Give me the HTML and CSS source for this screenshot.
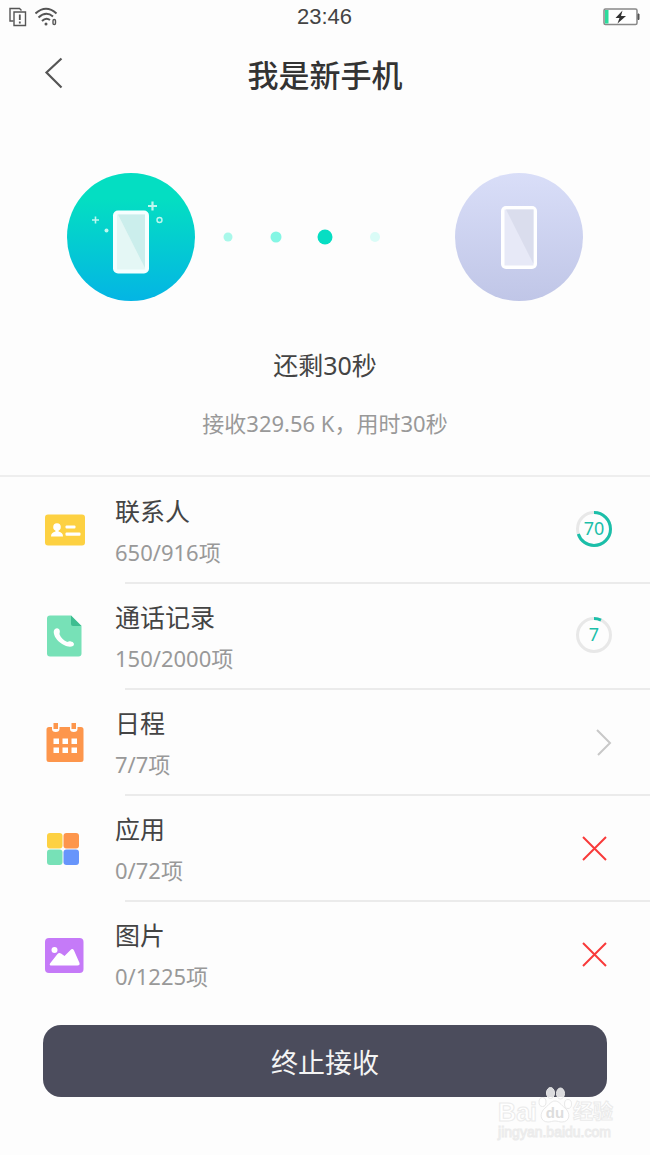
FILE: index.html
```html
<!DOCTYPE html>
<html lang="zh-CN">
<head>
<meta charset="utf-8">
<meta name="viewport" content="width=device-width, initial-scale=1">
<title>我是新手机</title>
<link rel="stylesheet" href="styles.css">
</head>
<body>
<div class="status">
  <div class="status-left">
    <svg width="18" height="20" viewBox="0 0 18 20" fill="none" stroke="#555" stroke-width="1.4"><path d="M4.500 14H1V1.500H10.500l2 2"/><path d="M5 5H16.500V18.500H5z"/><path d="M10.800 7.500v5.500M10.800 14.500v2" stroke-width="1.800"/></svg>
    <svg width="24" height="20" viewBox="0 0 24 20" fill="none" stroke="#555" stroke-width="2"><path d="M.5 6.500Q11-3 21.500 6.500M3.500 10.500Q11 3.500 18 9.500M7 14Q11 10 15 13"/><circle cx="11" cy="17" r="1.500" fill="#555" stroke="none"/><rect x="18" y="12.500" width="2.500" height="5" rx="1.200" stroke-width="1.400"/></svg>
  </div>
  <time class="clock">23:46</time>
  <svg class="battery" width="37" height="18" viewBox="0 0 37 18"><rect x="1" y="1" width="33" height="15.500" rx="1.500" fill="#fff" stroke="#888" stroke-width="1.500"/><rect x="2" y="2" width="3.500" height="13.500" fill="#2bdc9c"/><path d="M35 6h1v5.500h-1z" fill="#555" stroke="#555"/><path d="M19.500 2.500l-7 7.500h4l-2 5.500 8.500-7.500h-5z" fill="#333"/></svg>
</div>
<header class="header">
  <button class="back" type="button" aria-label="返回"><svg width="20" height="34" viewBox="0 0 20 34" fill="none" stroke="#555" stroke-width="2.200"><path d="M17.500 1.500L2.500 15.500 17.500 30.500"/></svg></button>
  <h1 class="title">我是新手机</h1>
</header>
<main>
  <section class="devices">
    <svg class="device" viewBox="0 0 128 128">
      <defs><linearGradient id="g1" x1="0" y1="0" x2="0" y2="1"><stop offset=".2" stop-color="#04dec2"/><stop offset="1" stop-color="#04b5e4"/></linearGradient></defs>
      <circle cx="64" cy="64" r="64" fill="url(#g1)"/>
      <rect x="46" y="37.500" width="36" height="63" rx="5" fill="#f5ffff"/>
      <rect x="50" y="41.500" width="28" height="55" fill="#e4f7f5"/>
      <path d="M51 41.500H78V95z" fill="#cbeeec"/>
      <g fill="none" stroke="#bdf7ef"><path d="M85.500 28.500v9M81 33h9" stroke-width="2.200"/><path d="M28.500 43.500v7M25 47h7" stroke-width="1.600"/><circle cx="92.500" cy="47" r="2.500" stroke-width="1.400"/></g>
      <circle cx="39.500" cy="57.500" r="2" fill="#bdf7ef"/>
    </svg>
    <svg class="dots" width="160" height="20" viewBox="0 0 160 20"><circle cx="5" cy="10" r="4.500" fill="#a9f8ea"/><circle cx="53" cy="10" r="5.500" fill="#84f6e4"/><circle cx="102" cy="10" r="7.500" fill="#06dec3"/><circle cx="152" cy="10" r="5" fill="#dafcf7"/></svg>
    <svg class="device" viewBox="0 0 128 128">
      <defs><linearGradient id="g2" x1="0" y1="0" x2="0" y2="1"><stop offset="0" stop-color="#d9def8"/><stop offset="1" stop-color="#c0c6e7"/></linearGradient></defs>
      <circle cx="64" cy="64" r="64" fill="url(#g2)"/>
      <rect x="46" y="33" width="36" height="63" rx="5" fill="#fff"/>
      <rect x="49.500" y="36.500" width="29" height="56" fill="#e7e9f7"/>
      <path d="M51 36.500H78.500V91z" fill="#dadded"/>
    </svg>
  </section>
  <p class="remain">还剩30秒</p>
  <p class="detail">接收329.56 K，用时30秒</p>
  <ul class="list">
    <li class="row">
      <svg class="icon" viewBox="0 0 40 44"><rect y="6.500" width="40" height="31" rx="3" fill="#fdd142"/><g fill="#fff"><circle cx="12" cy="19" r="3.800"/><path d="M10.500 21h3v2.500c3 .8 4.500 2 4.500 5H6c0-3 1.500-4.200 4.500-5z"/><rect x="20.500" y="17.500" width="10" height="3" rx="1"/><rect x="20.500" y="24.500" width="15" height="3.200" rx="1"/></g></svg>
      <div class="info"><h2 class="name">联系人</h2><p class="count">650/916项</p></div>
      <svg class="action ring" viewBox="0 0 38 38" role="img" aria-label="70%"><circle class="track" cx="19" cy="18" r="16.500"/><circle class="progress" cx="19" cy="18" r="16.500" pathLength="100" stroke-dasharray="70 100" transform="rotate(-90 19 18)"/><text x="19" y="24">70</text></svg>
    </li>
    <li class="row">
      <svg class="icon" viewBox="0 0 40 44"><path d="M5 1.500H26L36.500 12V39.500a3 3 0 0 1-3 3H5a3 3 0 0 1-3-3V4.500a3 3 0 0 1 3-3z" fill="#77e1b7"/><path d="M26 1.500L36.500 12H28a2 2 0 0 1-2-2z" fill="#3dbd90"/><path d="M10 15c2-1.500 4.500-.5 4.800 2 .2 1.500-.6 2.500-.2 3.500 1.200 3 4 6 7.200 7.300 1.200.4 2-.6 4-.4 3 .3 4.200 3 2.200 4.600-2.500 1.200-6 .6-9-1C14 28.500 9.500 24 8.800 19c-.2-1.800.2-3.300 1.200-4z" fill="#fff"/></svg>
      <div class="info"><h2 class="name">通话记录</h2><p class="count">150/2000项</p></div>
      <svg class="action ring" viewBox="0 0 38 38" role="img" aria-label="7%"><circle class="track" cx="19" cy="18" r="16.500"/><circle class="progress" cx="19" cy="18" r="16.500" pathLength="100" stroke-dasharray="7 100" transform="rotate(-90 19 18)"/><text x="19" y="24">7</text></svg>
    </li>
    <li class="row">
      <svg class="icon" viewBox="0 0 40 44"><path d="M4 7H36a2.500 2.500 0 0 1 2.500 2.500V39.500a2.500 2.500 0 0 1-2.500 2.500H4a2.500 2.500 0 0 1-2.500-2.500V9.500A2.500 2.500 0 0 1 4 7z" fill="#fd964c"/><path d="M7 6h7.500v3a3.700 3 0 0 1-7.500 0zM25 6h7.500v3a3.700 3 0 0 1-7.500 0z" fill="#fdfdfd"/><path d="M8.500 3h4.500v6H8.500zM26.500 3h4.500v6h-4.500z" fill="#fd964c"/><path d="M8.500 18.500h5.500v5.500H8.500zm9 0H23v5.500h-5.500zm9 0H32v5.500h-5.500zm-18 9h5.500V33H8.500zm9 0H23V33h-5.500zm9 0H32V33h-5.500z" fill="#fff"/></svg>
      <div class="info"><h2 class="name">日程</h2><p class="count">7/7项</p></div>
      <button class="action more" type="button" aria-label="查看日程"><svg width="18" height="28" viewBox="0 0 18 28" fill="none" stroke="#c8c8c8" stroke-width="2"><path d="M2 2L15 15 3 27"/></svg></button>
    </li>
    <li class="row">
      <svg class="icon" viewBox="0 0 40 44"><rect x="2" y="7" width="15.500" height="15.500" rx="3" fill="#fdd142"/><rect x="18.500" y="7" width="15.500" height="15.500" rx="3" fill="#fd964c"/><rect x="2" y="23.500" width="15.500" height="15.500" rx="3" fill="#77e1b7"/><rect x="18.500" y="23.500" width="15.500" height="15.500" rx="3" fill="#6795fb"/></svg>
      <div class="info"><h2 class="name">应用</h2><p class="count">0/72项</p></div>
      <svg class="action cross" viewBox="0 0 38 38" role="img" aria-label="未完成"><path d="M8 8L31 31M31 8L8 31"/></svg>
    </li>
    <li class="row">
      <svg class="icon" viewBox="0 0 40 44"><rect y="6" width="38.500" height="35" rx="4" fill="#c57af8"/><g fill="#fff"><circle cx="9.500" cy="18" r="3"/><path d="M5 31.500L12.500 22q1.500-1.800 3.500-.5l3.500 2.500L25.500 18q2-2 3.500.5L34.500 31q.5 2.500-2 2.500H6.500q-2.500 0-1.500-2z"/></g></svg>
      <div class="info"><h2 class="name">图片</h2><p class="count">0/1225项</p></div>
      <svg class="action cross" viewBox="0 0 38 38" role="img" aria-label="未完成"><path d="M8 8L31 31M31 8L8 31"/></svg>
    </li>
  </ul>
  <footer class="footer">
    <button class="stop" type="button">终止接收</button>
    <div class="watermark">
      <div class="brand"><span>Bai</span><svg width="34" height="38" viewBox="0 0 34 38"><g fill="#fff" fill-opacity=".8" stroke="#e9e9e9" stroke-width="1"><ellipse cx="4.500" cy="17" rx="3.500" ry="4.500"/><ellipse cx="12.500" cy="8" rx="4" ry="5.500"/><ellipse cx="22.500" cy="8.500" rx="4" ry="5.500"/><ellipse cx="30" cy="19" rx="3.500" ry="4.500"/><path d="M17 16c4 0 6 4 10 7 6 5 5 14-3 14-3 0-4-1-7-1s-4 1-7 1c-8 0-9-9-3-14 4-3 6-7 10-7z" fill-opacity="1"/></g><text x="17" y="33" class="du">du</text></svg><span class="brand-cn">经验</span></div>
      <div class="site">jingyan.baidu.com</div>
    </div>
  </footer>
</main>
</body>
</html>
```
FILE: styles.css
```css
* { box-sizing: border-box; }
body {
  margin: 0;
  background: #fdfdfd;
  color: #444;
  font-family: "Noto Sans", "Noto Sans CJK SC", sans-serif;
}
h1, h2, p, ul { margin: 0; padding: 0; }
button { border: 0; padding: 0; background: none; font: inherit; cursor: pointer; }
svg { display: block; flex: none; }

.status {
  display: grid;
  grid-template-columns: 1fr auto 1fr;
  align-items: center;
  height: 34px;
  padding: 0 10px 0 9px;
}
.status-left { display: flex; gap: 8px; }
.clock { font: 22px/34px "Liberation Sans", sans-serif; }
.battery { justify-self: end; }

.header {
  display: grid;
  grid-template-columns: 40px 1fr 40px;
  align-items: center;
  height: 80px;
  padding: 0 34px;
}
.back { display: grid; place-items: center; height: 44px; }
.title { text-align: center; font-size: 31px; line-height: 44px; font-weight: 500; font-family: "Noto Sans CJK SC", sans-serif; color: #333; }

.devices {
  display: flex;
  align-items: center;
  padding: 59px 67px 0;
}
.device { width: 128px; height: 128px; }
.dots { margin: 0 auto 0 28px; }
.remain { margin-top: 44px; text-align: center; font-size: 25px; line-height: 40px; }
.detail { margin-top: 19px; text-align: center; font-size: 22px; line-height: 38px; color: #999; }

.list { margin-top: 33px; border-top: 2px solid #eee; list-style: none; }
.row {
  position: relative;
  display: flex;
  align-items: center;
  height: 106px;
  padding: 0 37px 0 45px;
}
.row + .row::before {
  content: "";
  position: absolute;
  top: -1px;
  left: 125px;
  right: 0;
  height: 2px;
  background: #ebebeb;
}
.icon { width: 40px; height: 44px; }
.info { flex: 1; margin-left: 30px; padding-top: 3px; }
.name { font-size: 25px; line-height: 41px; font-weight: 400; }
.count { font-size: 22px; line-height: 41px; color: #999; }
.action { width: 38px; height: 38px; }
.more { display: grid; place-items: center end; }
.ring circle { fill: none; stroke-width: 3; }
.ring .track { stroke: #e8e8e8; }
.ring .progress { stroke: #1bbfa9; }
.ring text { fill: #1bbfa9; font-size: 18px; text-anchor: middle; }
.cross { fill: none; stroke: #f83a3a; stroke-width: 2; }

.footer { position: relative; padding: 18px 43px 57px; }
.stop {
  display: block;
  width: 100%;
  height: 72px;
  border-radius: 18px;
  background: #4b4c5c;
  color: #f4f4f4;
  font-size: 27px;
}
.watermark {
  position: absolute;
  right: 37px;
  bottom: 13px;
  color: #fff;
  font-family: "Liberation Sans", "Noto Sans CJK SC", sans-serif;
  -webkit-text-stroke: 1px #ebebeb;
}
.brand { display: flex; align-items: flex-end; gap: 1px; font-size: 25px; line-height: 22px; font-weight: 700; }
.brand-cn { font-size: 20px; }
.du { fill: #ddd; font-size: 15px; text-anchor: middle; -webkit-text-stroke: 0; }
.site { font-size: 14px; line-height: 18px; }
```
